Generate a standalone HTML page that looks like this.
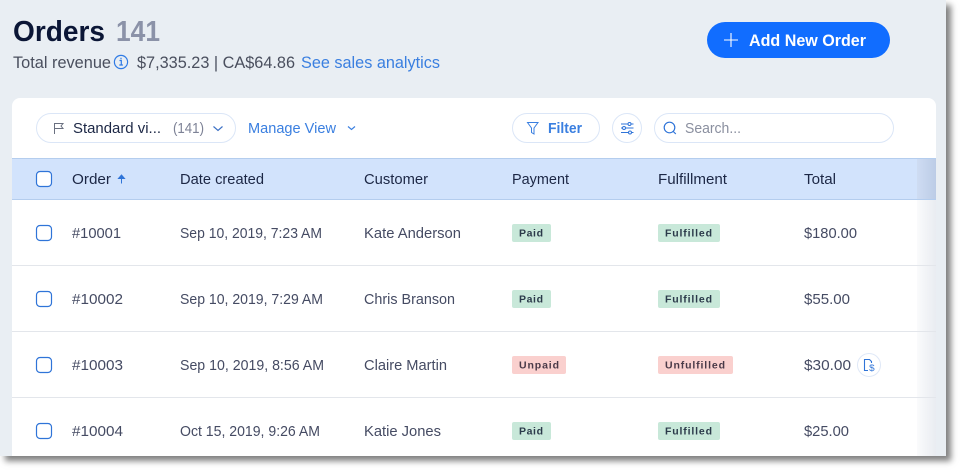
<!DOCTYPE html>
<html><head><meta charset="utf-8"><style>
html,body{margin:0;padding:0;background:#fff;width:961px;height:471px;overflow:hidden}
#bg{position:absolute;left:0;top:0;width:946px;height:456px;background:#e9eef3;box-shadow:5px 5px 6px rgba(0,0,0,.5)}
svg{position:absolute;left:0;top:0;font-family:"Liberation Sans",sans-serif}
.h{fill:#1c2745;font-size:15px}
.c{fill:#454b63;font-size:15px}
.b{font-size:10.5px;font-weight:bold;fill:#2b3a4a}
</style></head><body>
<div id="bg"></div>
<svg width="961" height="471" viewBox="0 0 961 471">
<defs>
<linearGradient id="g1" x1="0" x2="1" y1="0" y2="0"><stop offset="0" stop-color="#fafbfc"/><stop offset="1" stop-color="#e9ecf1"/></linearGradient>
<linearGradient id="g2" x1="0" x2="1" y1="0" y2="0"><stop offset="0" stop-color="#cedcf3"/><stop offset="1" stop-color="#bccce6"/></linearGradient>
</defs>
<text x="13" y="41" font-size="29" font-weight="bold" fill="#0b1636" textLength="92" lengthAdjust="spacingAndGlyphs">Orders</text>
<text x="116" y="41" font-size="29" font-weight="bold" fill="#8b92a8" textLength="44" lengthAdjust="spacingAndGlyphs">141</text>
<text x="13" y="68" font-size="17" fill="#4a4f5e" textLength="98" lengthAdjust="spacingAndGlyphs">Total revenue</text>
<circle cx="121" cy="62" r="6.6" fill="none" stroke="#2f7be5" stroke-width="1.2"/>
<path d="M119.5 60.5h1.8v4.3M119.3 65h3.6M121 57.8v1.4" fill="none" stroke="#2f7be5" stroke-width="1.2"/>
<text x="137" y="68" font-size="17" fill="#4a4f5e" textLength="158" lengthAdjust="spacingAndGlyphs">$7,335.23 | CA$64.86</text>
<text x="301" y="68" font-size="17" fill="#3a7fe0" textLength="139" lengthAdjust="spacingAndGlyphs">See sales analytics</text>

<rect x="707" y="22" width="183" height="36" rx="18" fill="#116dff"/>
<path d="M731 33v14M724 40h14" stroke="#fff" stroke-width="1.1" fill="none"/>
<text x="749" y="46" font-size="17" font-weight="bold" fill="#fff" textLength="117" lengthAdjust="spacingAndGlyphs">Add New Order</text>

<path d="M12 456V106a8 8 0 0 1 8-8H928a8 8 0 0 1 8 8V456Z" fill="#fff"/>
<rect x="917" y="200" width="19" height="256" fill="url(#g1)"/>

<rect x="36.5" y="113.5" width="199" height="29" rx="14.5" fill="#fff" stroke="#dbe6f7"/>
<path d="M54.500 134v-10.500h8.500l-2 2.500 2 2.500h-8.500" fill="none" stroke="#6a7080" stroke-width="1"/>
<text x="73" y="133" font-size="15" fill="#1c2745" textLength="88" lengthAdjust="spacingAndGlyphs">Standard vi...</text>
<text x="173" y="133" font-size="15" fill="#7d8296" textLength="31" lengthAdjust="spacingAndGlyphs">(141)</text>
<path d="M213.500 126.500l4.500 4 4.500-4" fill="none" stroke="#3a6fc4" stroke-width="1.200"/>
<text x="248" y="133" font-size="15" fill="#3a7fe0" textLength="88" lengthAdjust="spacingAndGlyphs">Manage View</text>
<path d="M348 126.500l3.500 3 3.500-3" fill="none" stroke="#3a7fe0" stroke-width="1.200"/>

<rect x="512.500" y="113.500" width="87" height="29" rx="14.500" fill="#fff" stroke="#dbe6f7"/>
<path d="M527.500 122.500h10.500l-4 5.500v6l-2.500-1.500v-4.500Z" fill="none" stroke="#3a7fe0" stroke-width="1"/>
<text x="548" y="133" font-size="15" font-weight="bold" fill="#3a7fe0" textLength="34" lengthAdjust="spacingAndGlyphs">Filter</text>
<circle cx="627" cy="128" r="14.500" fill="#fff" stroke="#dbe6f7"/>
<path d="M621 124h12.500M621 128h12.500M621 132.500h12.500" stroke="#2f74d8" stroke-width="1.100" fill="none"/>
<circle cx="629.500" cy="124" r="1.500" fill="#fff" stroke="#2f74d8"/>
<circle cx="624" cy="128" r="1.500" fill="#fff" stroke="#2f74d8"/>
<circle cx="630" cy="132.500" r="1.500" fill="#fff" stroke="#2f74d8"/>
<rect x="654.500" y="113.500" width="239" height="29" rx="14.500" fill="#fff" stroke="#dbe6f7"/>
<circle cx="669.500" cy="127.500" r="5.300" fill="none" stroke="#2f74d8" stroke-width="1.200"/>
<path d="M673.300 131.500l2.500 2.500" stroke="#2f74d8" stroke-width="1.200"/>
<text x="685" y="133" font-size="15" fill="#8a8f9f" textLength="56" lengthAdjust="spacingAndGlyphs">Search...</text>

<rect x="12" y="158" width="924" height="42" fill="#d2e3fc"/>
<rect x="917" y="158" width="19" height="42" fill="url(#g2)"/>
<rect x="12" y="158" width="924" height="1" fill="#b4cdee"/>
<rect x="12" y="199" width="924" height="1" fill="#b4cdee"/>
<rect x="36.500" y="171.500" width="15" height="15" rx="3.500" fill="#fff" stroke="#2f74d8" stroke-width="1.200"/>
<text class="h" x="72" y="184" textLength="39" lengthAdjust="spacingAndGlyphs">Order</text>
<path d="M121.500 183.500v-8M118.500 178.500l3-3.500 3 3.500Z" fill="#2f74d8" stroke="#2f74d8" stroke-width="1"/>
<text class="h" x="180" y="184" textLength="84" lengthAdjust="spacingAndGlyphs">Date created</text>
<text class="h" x="364" y="184" textLength="64" lengthAdjust="spacingAndGlyphs">Customer</text>
<text class="h" x="512" y="184" textLength="57" lengthAdjust="spacingAndGlyphs">Payment</text>
<text class="h" x="658" y="184" textLength="69" lengthAdjust="spacingAndGlyphs">Fulfillment</text>
<text class="h" x="804" y="184" textLength="32" lengthAdjust="spacingAndGlyphs">Total</text>

<rect x="12" y="265" width="924" height="1" fill="#e3e6eb"/>
<rect x="12" y="331" width="924" height="1" fill="#e3e6eb"/>
<rect x="12" y="397" width="924" height="1" fill="#e3e6eb"/>

<!-- row 1 -->
<rect x="36.500" y="225.500" width="15" height="15" rx="3.500" fill="#fff" stroke="#2f74d8" stroke-width="1.200"/>
<text class="c" x="72" y="238" textLength="49" lengthAdjust="spacingAndGlyphs">#10001</text>
<text class="c" x="180" y="238" textLength="142" lengthAdjust="spacingAndGlyphs">Sep 10, 2019, 7:23 AM</text>
<text class="c" x="364" y="238" textLength="97" lengthAdjust="spacingAndGlyphs">Kate Anderson</text>
<rect x="512" y="224" width="39" height="18" rx="2" fill="#c8e8d9"/>
<text class="b" x="519" y="236.500" textLength="24">Paid</text>
<rect x="658" y="224" width="62" height="18" rx="2" fill="#c8e8d9"/>
<text class="b" x="665" y="236.500" textLength="47">Fulfilled</text>
<text class="c" x="804" y="238" textLength="53" lengthAdjust="spacingAndGlyphs">$180.00</text>

<!-- row 2 -->
<rect x="36.500" y="291.500" width="15" height="15" rx="3.500" fill="#fff" stroke="#2f74d8" stroke-width="1.200"/>
<text class="c" x="72" y="304" textLength="51" lengthAdjust="spacingAndGlyphs">#10002</text>
<text class="c" x="180" y="304" textLength="143" lengthAdjust="spacingAndGlyphs">Sep 10, 2019, 7:29 AM</text>
<text class="c" x="364" y="304" textLength="91" lengthAdjust="spacingAndGlyphs">Chris Branson</text>
<rect x="512" y="290" width="39" height="18" rx="2" fill="#c8e8d9"/>
<text class="b" x="519" y="302.500" textLength="24">Paid</text>
<rect x="658" y="290" width="62" height="18" rx="2" fill="#c8e8d9"/>
<text class="b" x="665" y="302.500" textLength="47">Fulfilled</text>
<text class="c" x="804" y="304" textLength="46" lengthAdjust="spacingAndGlyphs">$55.00</text>

<!-- row 3 -->
<rect x="36.500" y="357.500" width="15" height="15" rx="3.500" fill="#fff" stroke="#2f74d8" stroke-width="1.200"/>
<text class="c" x="72" y="370" textLength="51" lengthAdjust="spacingAndGlyphs">#10003</text>
<text class="c" x="180" y="370" textLength="144" lengthAdjust="spacingAndGlyphs">Sep 10, 2019, 8:56 AM</text>
<text class="c" x="364" y="370" textLength="83" lengthAdjust="spacingAndGlyphs">Claire Martin</text>
<rect x="512" y="356" width="54" height="18" rx="2" fill="#fad0ce"/>
<text class="b" x="519" y="368.500" textLength="40" style="fill:#4a3a48">Unpaid</text>
<rect x="658" y="356" width="75" height="18" rx="2" fill="#fad0ce"/>
<text class="b" x="665" y="368.500" textLength="60" style="fill:#4a3a48">Unfulfilled</text>
<text class="c" x="804" y="370" textLength="47" lengthAdjust="spacingAndGlyphs">$30.00</text>
<circle cx="869" cy="365" r="11.500" fill="#fff" stroke="#dfe8f7"/>
<path d="M868 370.500h-3.500v-11h5l2 2v1.500" fill="none" stroke="#2f74d8" stroke-width="1.100"/>
<text x="869.200" y="371" font-size="9.500" fill="#2f74d8" textLength="5.500" lengthAdjust="spacingAndGlyphs">$</text>

<!-- row 4 -->
<rect x="36.500" y="423.500" width="15" height="15" rx="3.500" fill="#fff" stroke="#2f74d8" stroke-width="1.200"/>
<text class="c" x="72" y="436" textLength="51" lengthAdjust="spacingAndGlyphs">#10004</text>
<text class="c" x="180" y="436" textLength="140" lengthAdjust="spacingAndGlyphs">Oct 15, 2019, 9:26 AM</text>
<text class="c" x="364" y="436" textLength="77" lengthAdjust="spacingAndGlyphs">Katie Jones</text>
<rect x="512" y="422" width="39" height="18" rx="2" fill="#c8e8d9"/>
<text class="b" x="519" y="434.500" textLength="24">Paid</text>
<rect x="658" y="422" width="62" height="18" rx="2" fill="#c8e8d9"/>
<text class="b" x="665" y="434.500" textLength="47">Fulfilled</text>
<text class="c" x="804" y="436" textLength="45" lengthAdjust="spacingAndGlyphs">$25.00</text>
</svg>
</body></html>
